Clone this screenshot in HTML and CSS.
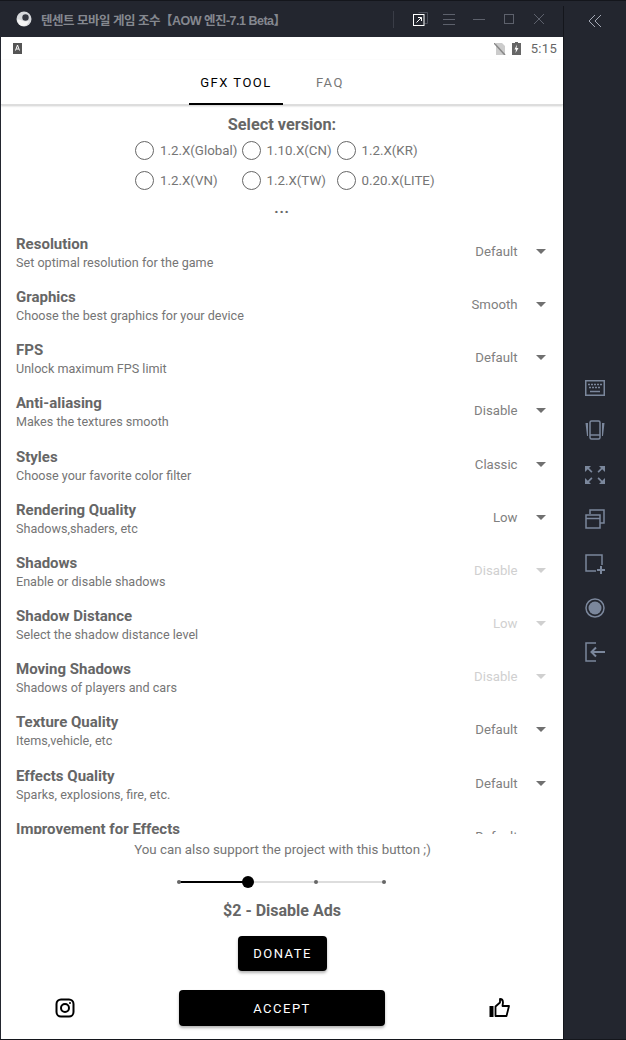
FILE: index.html
```html
<!DOCTYPE html>
<html lang="ko">
<head>
  <meta charset="UTF-8">
  <title>GFX Tool</title>
  <link rel="stylesheet" href="styles.css">
</head>
<body>
  <div class="window">
    <div class="main">

      <div class="titlebar">
        <svg class="app-logo" width="16" height="16" viewBox="0 0 16 16">
          <circle cx="8" cy="8" r="7.500" fill="#d6d8dc"/>
          <path d="M1 9c3-2 6 3 12 1-1 3-3 5-6 5-3 0-5-3-6-6z" fill="#f4f4f4"/>
          <circle cx="9.500" cy="6.500" r="3.200" fill="#33363f"/>
        </svg>
        <span class="title-text">텐센트 모바일 게임 조수【AOW 엔진-7.1 Beta】</span>
        <span class="title-sep"></span>
        <svg class="win-icon win-restore" width="20" height="20" viewBox="0 0 20 20" fill="none">
          <path d="M7.500 3.500h9v11h-3" stroke="#4c505b"/>
          <rect x="2.500" y="5.500" width="10.500" height="11" fill="#23262f" stroke="#fff"/>
          <path d="M5.500 13.500l5-5M7 8.500h3.500V12" stroke="#fff"/>
        </svg>
        <svg class="win-icon" width="14" height="14" viewBox="0 0 14 14" fill="none" stroke="#5d616c">
          <path d="M1 2.500h12M1 7.500h12M1 12.500h12"/>
        </svg>
        <svg class="win-icon" width="14" height="14" viewBox="0 0 14 14" fill="none" stroke="#5d616c">
          <path d="M1 7.500h12"/>
        </svg>
        <svg class="win-icon" width="14" height="14" viewBox="0 0 14 14" fill="none" stroke="#5d616c">
          <rect x="2.500" y="2.500" width="9" height="9"/>
        </svg>
        <svg class="win-icon" width="14" height="14" viewBox="0 0 14 14" fill="none" stroke="#5d616c">
          <path d="M2 2l10 10M12 2L2 12"/>
        </svg>
      </div>

      <div class="phone">
        <div class="statusbar">
          <svg width="9" height="11" viewBox="0 0 9 11">
            <rect width="9" height="11" fill="#555"/>
            <path d="M2.500 7.500L4.500 2l2 5.500M3.300 6h2.400" stroke="#fff" fill="none"/>
          </svg>
          <span class="status-right">
            <svg width="12" height="12" viewBox="0 0 12 12">
              <path d="M2 0h6l3 3v9H2z" fill="#ccc"/>
              <path d="M0 0l11 12" stroke="#888" stroke-width="1.500"/>
            </svg>
            <svg width="9" height="13" viewBox="0 0 9 13">
              <path d="M3 0h3v1h3v12H0V1h3z" fill="#666"/>
              <path d="M5 2.500L2.500 7.500H4L3.500 11 6.500 6H4.500z" fill="#fff"/>
            </svg>
            <span class="clock">5:15</span>
          </span>
        </div>

        <div class="tabs">
          <div class="tab tab-active">GFX TOOL</div>
          <div class="tab">FAQ</div>
        </div>

        <div class="scroll">
          <div class="versions">
            <h2>Select version:</h2>
            <div class="version-grid">
              <label class="radio"><i></i>1.2.X(Global)</label>
              <label class="radio"><i></i>1.10.X(CN)</label>
              <label class="radio"><i></i>1.2.X(KR)</label>
              <label class="radio"><i></i>1.2.X(VN)</label>
              <label class="radio"><i></i>1.2.X(TW)</label>
              <label class="radio"><i></i>0.20.X(LITE)</label>
            </div>
            <div class="more">...</div>
          </div>

          <div class="row">
            <div><h3>Resolution</h3><p>Set optimal resolution for the game</p></div>
            <div class="select"><span>Default</span><b class="caret"></b></div>
          </div>
          <div class="row">
            <div><h3>Graphics</h3><p>Choose the best graphics for your device</p></div>
            <div class="select"><span>Smooth</span><b class="caret"></b></div>
          </div>
          <div class="row">
            <div><h3>FPS</h3><p>Unlock maximum FPS limit</p></div>
            <div class="select"><span>Default</span><b class="caret"></b></div>
          </div>
          <div class="row">
            <div><h3>Anti-aliasing</h3><p>Makes the textures smooth</p></div>
            <div class="select"><span>Disable</span><b class="caret"></b></div>
          </div>
          <div class="row">
            <div><h3>Styles</h3><p>Choose your favorite color filter</p></div>
            <div class="select"><span>Classic</span><b class="caret"></b></div>
          </div>
          <div class="row">
            <div><h3>Rendering Quality</h3><p>Shadows,shaders, etc</p></div>
            <div class="select"><span>Low</span><b class="caret"></b></div>
          </div>
          <div class="row">
            <div><h3>Shadows</h3><p>Enable or disable shadows</p></div>
            <div class="select off"><span>Disable</span><b class="caret"></b></div>
          </div>
          <div class="row">
            <div><h3>Shadow Distance</h3><p>Select the shadow distance level</p></div>
            <div class="select off"><span>Low</span><b class="caret"></b></div>
          </div>
          <div class="row">
            <div><h3>Moving Shadows</h3><p>Shadows of players and cars</p></div>
            <div class="select off"><span>Disable</span><b class="caret"></b></div>
          </div>
          <div class="row">
            <div><h3>Texture Quality</h3><p>Items,vehicle, etc</p></div>
            <div class="select"><span>Default</span><b class="caret"></b></div>
          </div>
          <div class="row">
            <div><h3>Effects Quality</h3><p>Sparks, explosions, fire, etc.</p></div>
            <div class="select"><span>Default</span><b class="caret"></b></div>
          </div>
          <div class="row">
            <div><h3>Improvement for Effects</h3><p>Particles and effects</p></div>
            <div class="select"><span>Default</span><b class="caret"></b></div>
          </div>
        </div>

        <div class="footer">
          <p class="support">You can also support the project with this button ;)</p>
          <div class="slider">
            <span class="slider-fill"></span>
            <span class="tick"></span>
            <span class="thumb"></span>
            <span class="tick"></span>
            <span class="tick"></span>
          </div>
          <div class="price">$2 - Disable Ads</div>
          <button class="btn btn-donate">DONATE</button>
          <div class="actions">
            <svg width="20" height="20" viewBox="0 0 20 20" fill="none" stroke="#000" stroke-width="2">
              <rect x="1.500" y="1.500" width="17" height="17" rx="4.500"/>
              <circle cx="10" cy="10" r="4"/>
              <circle cx="15" cy="5" r="1" fill="#000" stroke="none"/>
            </svg>
            <button class="btn btn-accept">ACCEPT</button>
            <svg width="22" height="20" viewBox="0 0 22 20" fill="none">
              <rect x="0.500" y="8" width="4" height="11" fill="#000"/>
              <path d="M6.500 18V8.500l4.500-4V1c2 0 3 1.500 3 3.500L13.500 8H20l-2.500 10z" stroke="#000" stroke-width="1.800" stroke-linejoin="round"/>
            </svg>
          </div>
        </div>
      </div>
    </div>

    <div class="side">
      <svg class="collapse" width="14" height="14" viewBox="0 0 14 14" fill="none" stroke="#a4a9b5">
        <path d="M7 1L1 7l6 6M13 1L7 7l6 6"/>
      </svg>
      <div class="tools">
        <svg width="20" height="16" viewBox="0 0 20 16" fill="none" stroke="#7b879c" stroke-width="1.500">
          <rect x="0.750" y="0.750" width="18.500" height="14.500"/>
          <path d="M3 4.500h14M4 7.500h12" stroke-dasharray="2 1"/>
          <path d="M5 11.500h10"/>
        </svg>
        <svg width="20" height="20" viewBox="0 0 20 20" fill="none" stroke="#7b879c" stroke-width="1.500">
          <rect x="5" y="1" width="10" height="18" rx="1.500"/>
          <path d="M5 15h10"/>
          <path d="M3 3H0.500L2 16h1zM17 3h2.500L18 16h-1z" fill="#7b879c" stroke="none"/>
        </svg>
        <svg width="20" height="20" viewBox="0 0 20 20" fill="#7b879c">
          <path d="M0 1h6L4 3l3.500 3.500-1.200 1.200L2.800 4.200 0 7zM20 1h-6l2 2-3.500 3.500 1.200 1.200 3.500-3.500L20 7zM0 19h6l-2-2 3.500-3.500-1.200-1.200-3.500 3.500L0 13zM20 19h-6l2-2-3.500-3.500 1.200-1.200 3.500 3.500 2.800-2.800z"/>
        </svg>
        <svg width="20" height="20" viewBox="0 0 20 20" fill="none" stroke="#7b879c" stroke-width="1.500">
          <path d="M5 5V1h14v13h-4"/>
          <rect x="1" y="6" width="14" height="13"/>
          <path d="M1 9.500h14"/>
        </svg>
        <svg width="20" height="20" viewBox="0 0 20 20" fill="none" stroke="#7b879c" stroke-width="1.500">
          <path d="M11 17H1V1h16v10"/>
          <path d="M16 12v8M12 16h8" stroke-width="2"/>
        </svg>
        <svg width="20" height="20" viewBox="0 0 20 20" fill="none">
          <circle cx="10" cy="10" r="9" stroke="#7b879c" stroke-width="1.500"/>
          <circle cx="10" cy="10" r="6.500" fill="#7b879c"/>
        </svg>
        <svg width="20" height="20" viewBox="0 0 20 20" fill="none" stroke="#7b879c" stroke-width="1.500">
          <path d="M11 1H1v18h10"/>
          <path d="M20 10H7M11 5.500L6.500 10l4.500 4.500" stroke-width="2"/>
        </svg>
      </div>
    </div>
  </div>
</body>
</html>
```

FILE: styles.css
```css
* {
  box-sizing: border-box;
}

html, body {
  margin: 0;
  padding: 0;
  height: 100%;
  overflow: hidden;
}

body {
  font-family: Roboto, sans-serif;
  background: #23262f;
}

h2, h3, p {
  margin: 0;
}

.window {
  display: flex;
  width: 626px;
  height: 1040px;
  background: #23262f;
  border-top: 1px solid #14161c;
  border-bottom: 1px solid #14161c;
}

.main {
  width: 563px;
  display: flex;
  flex-direction: column;
  flex-shrink: 0;
}

/* title bar */
.titlebar {
  height: 36px;
  display: flex;
  align-items: center;
  padding-left: 16px;
}

.app-logo {
  flex-shrink: 0;
}

.title-text {
  margin-left: 9px;
  width: 352px;
  color: #85888f;
  font-family: "Liberation Sans", "Noto Sans CJK KR", sans-serif;
  font-size: 12.500px;
  font-weight: 700;
  letter-spacing: -0.500px;
  white-space: nowrap;
}

.title-sep {
  width: 1px;
  height: 17px;
  background: #3a3d47;
  margin-right: 17px;
}

.win-icon {
  margin-right: 16px;
}

.win-restore {
  margin-right: 11px;
}

/* android part */
.phone {
  flex: 1;
  min-height: 0;
  margin-left: 1px;
  background: #fff;
  display: flex;
  flex-direction: column;
}

.statusbar {
  height: 23px;
  flex-shrink: 0;
  display: flex;
  align-items: center;
  justify-content: space-between;
  padding: 0 6px 0 12px;
}

.status-right {
  display: flex;
  align-items: center;
  gap: 6px;
}

.clock {
  margin-left: 4px;
  font-size: 13px;
  color: #666;
  letter-spacing: 0.300px;
}

.tabs {
  height: 45px;
  flex-shrink: 0;
  display: flex;
  padding-left: 188px;
  border-bottom: 1px solid #ddd;
  box-shadow: 0 1px 2px rgba(0,0,0,0.2);
  position: relative;
}

.tab {
  height: 45px;
  line-height: 46px;
  font-size: 13px;
  font-weight: 450;
  letter-spacing: 1.500px;
  color: #777;
}

.tab-active {
  width: 94px;
  text-align: center;
  color: #000;
  border-bottom: 2px solid #000;
  margin-right: 33px;
}

.scroll {
  height: 729px;
  flex-shrink: 0;
  overflow: hidden;
}

.versions {
  height: 126.800px;
  padding-top: 10px;
  text-align: center;
}

.versions h2 {
  font-size: 16.300px;
  font-weight: 700;
  line-height: 19px;
  color: #666;
}

.version-grid {
  display: grid;
  grid-template-columns: 106.500px 95px auto;
  grid-auto-rows: 30px;
  margin: 1px 0 0 134px;
  text-align: left;
}

.radio {
  display: flex;
  align-items: center;
  font-size: 13.300px;
  color: #757575;
}

.radio i {
  width: 19px;
  height: 19px;
  margin-right: 6px;
  border: 1.500px solid #666;
  border-radius: 50%;
}

.more {
  font-size: 15px;
  font-weight: 700;
  line-height: 16px;
  letter-spacing: 0.800px;
  color: #666;
  margin-top: 5px;
}

.row {
  height: 53.200px;
  display: flex;
  justify-content: space-between;
  padding: 2px 17.500px 0 15px;
}

.row h3 {
  font-size: 15px;
  font-weight: 700;
  line-height: 20px;
  color: #666;
}

.row p {
  font-size: 12.600px;
  line-height: 17px;
  color: #757575;
}

.select {
  display: flex;
  align-items: center;
  height: 35px;
  font-size: 13.200px;
  color: #808080;
}

.select.off {
  color: #d0d0d0;
}

.caret {
  width: 0;
  height: 0;
  margin-left: 18px;
  border-left: 5px solid transparent;
  border-right: 5px solid transparent;
  border-top: 5px solid #707070;
}

.select.off .caret {
  border-top-color: #d0d0d0;
}

/* donate part */
.footer {
  flex: 1;
  min-height: 0;
  text-align: center;
}

.support {
  font-size: 13.300px;
  line-height: 20px;
  margin-top: 6px;
  padding-left: 1px;
  color: #757575;
}

.slider {
  position: relative;
  width: 209px;
  height: 12px;
  margin: 16px 0 0 176px;
  display: flex;
  align-items: center;
  background: linear-gradient(#ddd, #ddd) center / 100% 2px no-repeat;
}

.slider-fill {
  position: absolute;
  left: 2px;
  width: 68px;
  height: 2px;
  background: #000;
}

.tick {
  width: 4px;
  height: 4px;
  border-radius: 50%;
  background: #666;
  position: relative;
}

.thumb {
  width: 12px;
  height: 12px;
  margin: 0 60px 0 61px;
  border-radius: 50%;
  background: #000;
  position: relative;
}

.thumb + .tick + .tick {
  margin-left: 64px;
}

.price {
  font-size: 16px;
  font-weight: 700;
  line-height: 20px;
  margin-top: 13px;
  color: #666;
}

.btn {
  display: block;
  height: 35px;
  border: 0;
  border-radius: 4px;
  background: #000;
  color: #fff;
  font-family: Roboto, sans-serif;
  font-size: 13px;
  font-weight: 450;
  letter-spacing: 1.500px;
  box-shadow: 0 2px 3px rgba(0,0,0,0.3);
}

.btn-donate {
  width: 89px;
  margin: 15px 0 0 237px;
}

.actions {
  display: flex;
  align-items: center;
  margin-top: 19px;
  padding-left: 54px;
}

.btn-accept {
  width: 206px;
  height: 36px;
  margin: 0 104px;
}

/* emulator tools */
.side {
  flex: 1;
  margin-top: 5px;
  border-left: 1px solid #14161c;
  display: flex;
  flex-direction: column;
  align-items: center;
}

.collapse {
  margin-top: 8px;
}

.tools {
  margin-top: 352px;
  display: flex;
  flex-direction: column;
  align-items: center;
  gap: 24.400px;
}
```
